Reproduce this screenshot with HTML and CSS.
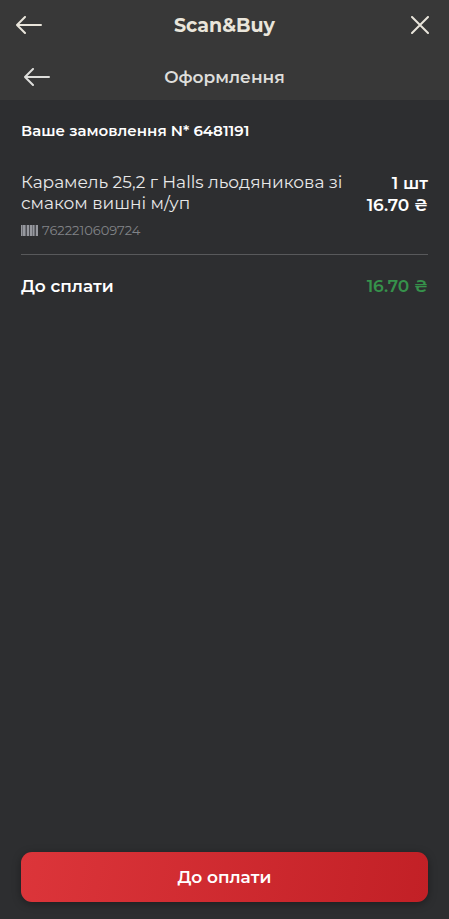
FILE: index.html
```html
<!DOCTYPE html>
<html lang="uk">
<head>
  <meta charset="utf-8">
  <meta name="viewport" content="width=device-width, initial-scale=1">
  <title>Scan&amp;Buy</title>
  <link rel="stylesheet" href="styles.css">
</head>
<body>
  <header class="header">
    <div class="bar bar-app">
      <button class="icon-button" type="button" aria-label="Назад">
        <svg class="icon" width="26" height="18" viewBox="0 0 26 18"><path d="M9 1 1 9l8 8M1 9h24"/></svg>
      </button>
      <h1 class="app-title">Scan&amp;Buy</h1>
      <button class="icon-button icon-button-end" type="button" aria-label="Закрити">
        <svg class="icon" width="18" height="18" viewBox="0 0 18 18"><path d="m1 1 16 16M17 1 1 17"/></svg>
      </button>
    </div>
    <div class="bar bar-page">
      <button class="icon-button" type="button" aria-label="Назад">
        <svg class="icon" width="26" height="18" viewBox="0 0 26 18"><path d="M9 1 1 9l8 8M1 9h24"/></svg>
      </button>
      <h2 class="page-title">Оформлення</h2>
    </div>
  </header>
  <main class="order">
    <h3 class="order-title">Ваше замовлення N* 6481191</h3>
    <article class="item">
      <div class="item-info">
        <p class="item-name">Карамель 25,2 г Halls льодяникова зі смаком вишні м/уп</p>
        <p class="item-code">
          <svg class="barcode" width="17" height="11" viewBox="0 0 17 11" aria-hidden="true"><path class="barcode-base" d="M0 0h17v11H0z"/><path class="barcode-bars" d="M0 0h1v11H0zM2 0h2v11H2zM6 0h2v11H6zM9 0h2v11H9zM12 0h1v11h-1zM15 0h2v11h-2z"/><path class="barcode-gaps" d="M5 0h1v11H5zM8 0h1v11H8zM14 0h1v11h-1z"/></svg>
          7622210609724
        </p>
      </div>
      <div class="item-sum">
        <p>1 шт</p>
        <p>16.70 ₴</p>
      </div>
    </article>
    <div class="total">
      <span>До сплати</span>
      <span class="total-sum">16.70 ₴</span>
    </div>
  </main>
  <footer class="footer">
    <button class="pay" type="button">До оплати</button>
  </footer>
</body>
</html>
```
FILE: styles.css
```css
* {
  box-sizing: border-box;
}

body {
  margin: 0;
  min-height: 100vh;
  display: flex;
  flex-direction: column;
  background: #2d2e30;
  color: #fff;
  font-family: Montserrat, Inter, sans-serif;
}

h1, h2, h3, p {
  margin: 0;
}

.header {
  background: #383838;
  color: #e9e5db;
}

.bar {
  display: grid;
  grid-template-columns: 1fr auto 1fr;
  align-items: center;
  height: 50px;
  padding: 0 16px;
}

.bar-page {
  padding: 4px 24px 0;
  color: #dededb;
}

.icon-button {
  display: flex;
  justify-content: center;
  justify-self: start;
  width: 26px;
  padding: 0;
  border: 0;
  background: none;
  color: inherit;
}

.icon-button-end {
  justify-self: end;
}

.icon {
  fill: none;
  stroke: currentColor;
  stroke-width: 2;
  stroke-linecap: round;
  stroke-linejoin: round;
}

.app-title {
  font-size: 19px;
  font-weight: 700;
}

.page-title {
  font-size: 17px;
  font-weight: 600;
}

.order {
  flex: 1;
  padding: 20px 21px;
}

.order-title {
  font-size: 15px;
  line-height: 22px;
  font-weight: 600;
}

.item {
  display: flex;
  justify-content: space-between;
  gap: 16px;
  margin-top: 30px;
  padding-bottom: 15px;
  border-bottom: 1px solid #58595b;
}

.item-info {
  flex: 1;
}

.item-name {
  color: #e8e8e8;
  font-size: 17px;
  line-height: 21px;
}

.item-code {
  display: flex;
  align-items: center;
  gap: 4px;
  margin-top: 7px;
  color: #818387;
  font-size: 13px;
  line-height: 18px;
}

.barcode-base {
  fill: #6c6e74;
}

.barcode-bars {
  fill: #96989e;
}

.barcode-gaps {
  fill: #4b4c51;
}

.item-sum {
  font-size: 17px;
  line-height: 22px;
  font-weight: 600;
  text-align: right;
  white-space: nowrap;
}

.total {
  display: flex;
  justify-content: space-between;
  margin-top: 20px;
  font-size: 17px;
  line-height: 22px;
  font-weight: 600;
}

.total-sum {
  color: #36924b;
}

.footer {
  padding: 0 21px 17px;
}

.pay {
  display: block;
  width: 100%;
  height: 50px;
  border: 0;
  border-radius: 11px;
  background: linear-gradient(100deg, #dc353a, #c22026);
  box-shadow: 0 2px 8px rgba(0, 0, 0, 0.35);
  color: #fff;
  font: inherit;
  font-size: 17px;
  font-weight: 600;
}
```
